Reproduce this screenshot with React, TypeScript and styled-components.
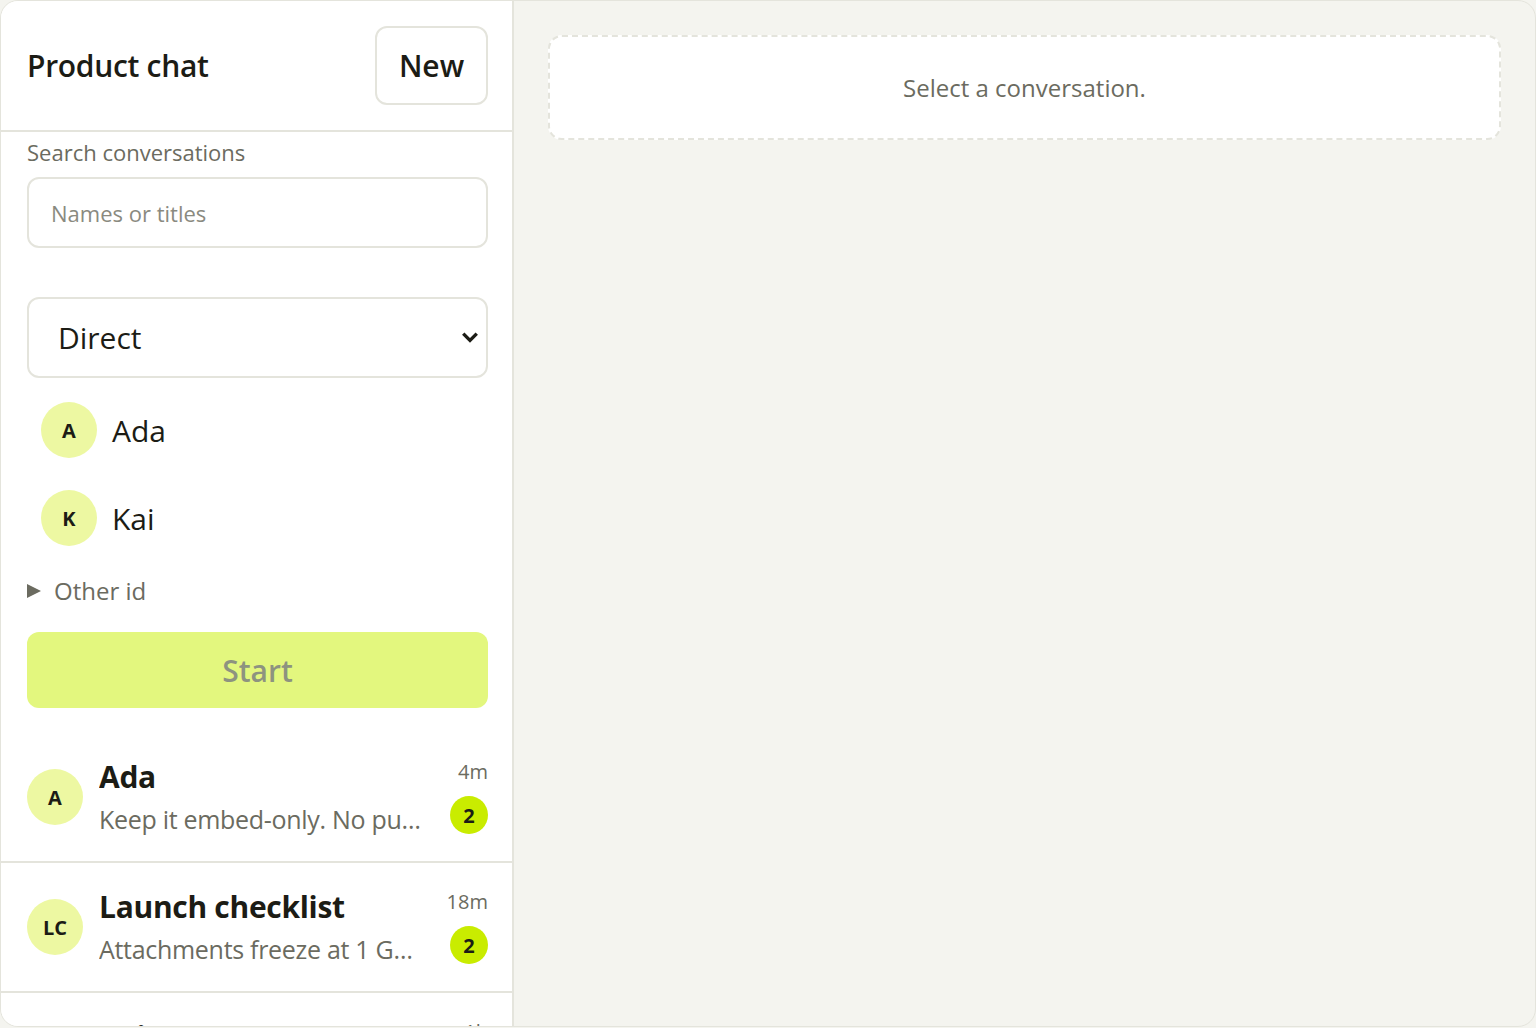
import React, { useState } from 'react';
import styled, { createGlobalStyle } from 'styled-components';

const COLORS = {
  PAGE: '#f4f4ef',
  WHITE: '#ffffff',
  BORDER: '#e4e4dc',
  TEXT: '#1c1c15',
  MUTED: '#6b6b60',
  PLACEHOLDER: '#8a8a80',
  AVATAR: '#edf8a2',
  START: '#e3f77e',
  START_TEXT: '#8d9380',
  BADGE: '#c9ec00',
};

const PEOPLE = [
  { id: 'ada', initials: 'A', name: 'Ada' },
  { id: 'kai', initials: 'K', name: 'Kai' },
];

const CONVERSATIONS = [
  {
    id: 'c1',
    initials: 'A',
    title: 'Ada',
    preview: 'Keep it embed-only. No public links for now.',
    time: '4m',
    unread: 2,
  },
  {
    id: 'c2',
    initials: 'LC',
    title: 'Launch checklist',
    preview: 'Attachments freeze at 1 GB until the migration lands.',
    time: '18m',
    unread: 2,
  },
  {
    id: 'c3',
    initials: 'K',
    title: 'Kai',
    preview: 'Pushed the new composer build to staging.',
    time: '1h',
    unread: 0,
  },
];

const GlobalStyle = createGlobalStyle`
  * { box-sizing: border-box; }
  html, body {
    margin: 0;
    padding: 0;
    background: ${COLORS.PAGE};
    font-family: "Open Sans", "Noto Sans", sans-serif;
    color: ${COLORS.TEXT};
  }
`;

const App = () => {
  const [query, setQuery] = useState('');
  const [kind, setKind] = useState('direct');

  return (
    <>
      <GlobalStyle />
      <Frame>
        <Sidebar>
          <Header>
            <Title>Product chat</Title>
            <NewButton>New</NewButton>
          </Header>
          <Form>
            <Label htmlFor="search">Search conversations</Label>
            <SearchInput
              id="search"
              placeholder="Names or titles"
              value={query}
              onChange={(e) => setQuery(e.target.value)}
            />
            <SelectWrap>
              <KindSelect value={kind} onChange={(e) => setKind(e.target.value)}>
                <option value="direct">Direct</option>
                <option value="group">Group</option>
              </KindSelect>
              <Chevron viewBox="0 0 16 12" aria-hidden="true">
                <path d="M2 3 L8 9 L14 3" />
              </Chevron>
            </SelectWrap>
            <People>
              {PEOPLE.map((person) => (
                <PersonRow key={person.id}>
                  <Avatar size={56}>{person.initials}</Avatar>
                  <PersonName>{person.name}</PersonName>
                </PersonRow>
              ))}
            </People>
            <Other>
              <OtherSummary>Other id</OtherSummary>
            </Other>
            <StartButton disabled>Start</StartButton>
          </Form>
          <List>
            {CONVERSATIONS.map((c) => (
              <Item key={c.id}>
                <Avatar size={56}>{c.initials}</Avatar>
                <ItemBody>
                  <ItemTitle>{c.title}</ItemTitle>
                  <ItemPreview>{c.preview}</ItemPreview>
                </ItemBody>
                <ItemMeta>
                  <Time>{c.time}</Time>
                  {c.unread > 0 && <Badge>{c.unread}</Badge>}
                </ItemMeta>
              </Item>
            ))}
          </List>
        </Sidebar>
        <Main>
          <Empty>Select a conversation.</Empty>
        </Main>
      </Frame>
    </>
  );
};

const Frame = styled.div`
  display: grid;
  grid-template-columns: 513px 1fr;
  width: 1536px;
  height: 1027px;
  border: 1px solid ${COLORS.BORDER};
  border-radius: 18px;
  overflow: hidden;
  background: ${COLORS.PAGE};
`;

const Sidebar = styled.aside`
  display: flex;
  flex-direction: column;
  background: ${COLORS.WHITE};
  border-right: 2px solid ${COLORS.BORDER};
  overflow: hidden;
`;

const Header = styled.header`
  display: flex;
  align-items: center;
  justify-content: space-between;
  height: 131px;
  padding: 0 24px 0 26px;
  border-bottom: 2px solid ${COLORS.BORDER};
  flex-shrink: 0;
`;

const Title = styled.h1`
  margin: 0;
  font-size: 30px;
  font-weight: 600;
  letter-spacing: -0.3px;
`;

const NewButton = styled.button`
  width: 113px;
  height: 79px;
  border: 2px solid ${COLORS.BORDER};
  border-radius: 12px;
  background: ${COLORS.WHITE};
  color: ${COLORS.TEXT};
  font-family: inherit;
  font-size: 30px;
  font-weight: 600;
  cursor: pointer;
`;

const Form = styled.div`
  display: flex;
  flex-direction: column;
  padding: 5px 24px 0 26px;
  flex-shrink: 0;
`;

const Label = styled.label`
  font-size: 22px;
  line-height: 30px;
  color: ${COLORS.MUTED};
`;

const SearchInput = styled.input`
  height: 71px;
  margin-top: 10px;
  padding: 0 22px;
  border: 2px solid ${COLORS.BORDER};
  border-radius: 12px;
  font-family: inherit;
  font-size: 22px;
  color: ${COLORS.TEXT};
  outline: none;

  &::placeholder {
    color: ${COLORS.PLACEHOLDER};
  }
`;

const SelectWrap = styled.div`
  position: relative;
  margin-top: 49px;
`;

const KindSelect = styled.select`
  width: 100%;
  height: 81px;
  padding: 0 29px;
  border: 2px solid ${COLORS.BORDER};
  border-radius: 12px;
  background: ${COLORS.WHITE};
  appearance: none;
  font-family: inherit;
  font-size: 30px;
  color: ${COLORS.TEXT};
  outline: none;
`;

const Chevron = styled.svg`
  position: absolute;
  right: 9px;
  top: 33px;
  width: 18px;
  height: 14px;
  fill: none;
  stroke: ${COLORS.TEXT};
  stroke-width: 3;
  pointer-events: none;
`;

const People = styled.div`
  display: flex;
  flex-direction: column;
  gap: 16px;
  margin-top: 16px;
`;

const PersonRow = styled.div`
  display: flex;
  align-items: center;
  gap: 15px;
  padding: 8px 14px;
`;

const Avatar = styled.div<{ size: number }>`
  display: flex;
  align-items: center;
  justify-content: center;
  width: ${(p) => p.size}px;
  height: ${(p) => p.size}px;
  flex-shrink: 0;
  border-radius: 50%;
  background: ${COLORS.AVATAR};
  color: ${COLORS.TEXT};
  font-size: 20px;
  font-weight: 700;
`;

const PersonName = styled.span`
  font-size: 30px;
`;

const Other = styled.details`
  margin-top: 21px;
`;

const OtherSummary = styled.summary`
  display: flex;
  align-items: center;
  list-style: none;
  font-size: 24px;
  line-height: 32px;
  color: ${COLORS.MUTED};
  cursor: pointer;

  &::-webkit-details-marker {
    display: none;
  }

  &::before {
    content: '';
    width: 0;
    height: 0;
    margin-right: 13px;
    border-top: 7px solid transparent;
    border-bottom: 7px solid transparent;
    border-left: 14px solid ${COLORS.MUTED};
  }
`;

const StartButton = styled.button`
  height: 76px;
  margin-top: 25px;
  border: none;
  border-radius: 12px;
  background: ${COLORS.START};
  color: ${COLORS.START_TEXT};
  font-family: inherit;
  font-size: 30px;
  font-weight: 600;
`;

const List = styled.div`
  display: flex;
  flex-direction: column;
  margin-top: 25px;
`;

const Item = styled.div`
  display: flex;
  align-items: center;
  gap: 16px;
  height: 130px;
  padding: 0 24px 0 26px;
  border-bottom: 2px solid ${COLORS.BORDER};
  flex-shrink: 0;
`;

const ItemBody = styled.div`
  display: flex;
  flex-direction: column;
  min-width: 0;
  flex: 1;
  gap: 4px;
`;

const ItemTitle = styled.div`
  font-size: 30px;
  font-weight: 700;
  line-height: 40px;
  letter-spacing: -0.3px;
  white-space: nowrap;
  overflow: hidden;
  text-overflow: ellipsis;
`;

const ItemPreview = styled.div`
  font-size: 25px;
  line-height: 36px;
  color: ${COLORS.MUTED};
  letter-spacing: -0.3px;
  white-space: nowrap;
  overflow: hidden;
  text-overflow: ellipsis;
`;

const ItemMeta = styled.div`
  display: flex;
  flex-direction: column;
  align-items: flex-end;
  gap: 12px;
  margin-left: 8px;
  align-self: flex-start;
  padding-top: 27px;
`;

const Time = styled.span`
  font-size: 20px;
  line-height: 24px;
  color: ${COLORS.MUTED};
`;

const Badge = styled.span`
  display: flex;
  align-items: center;
  justify-content: center;
  width: 38px;
  height: 38px;
  border-radius: 50%;
  background: ${COLORS.BADGE};
  font-size: 20px;
  font-weight: 700;
`;

const Main = styled.main`
  padding: 34px 34px;
`;

const Empty = styled.div`
  display: flex;
  align-items: center;
  justify-content: center;
  height: 105px;
  border: 2px dashed ${COLORS.BORDER};
  border-radius: 14px;
  background: ${COLORS.WHITE};
  font-size: 24px;
  color: ${COLORS.MUTED};
`;

export default App;
